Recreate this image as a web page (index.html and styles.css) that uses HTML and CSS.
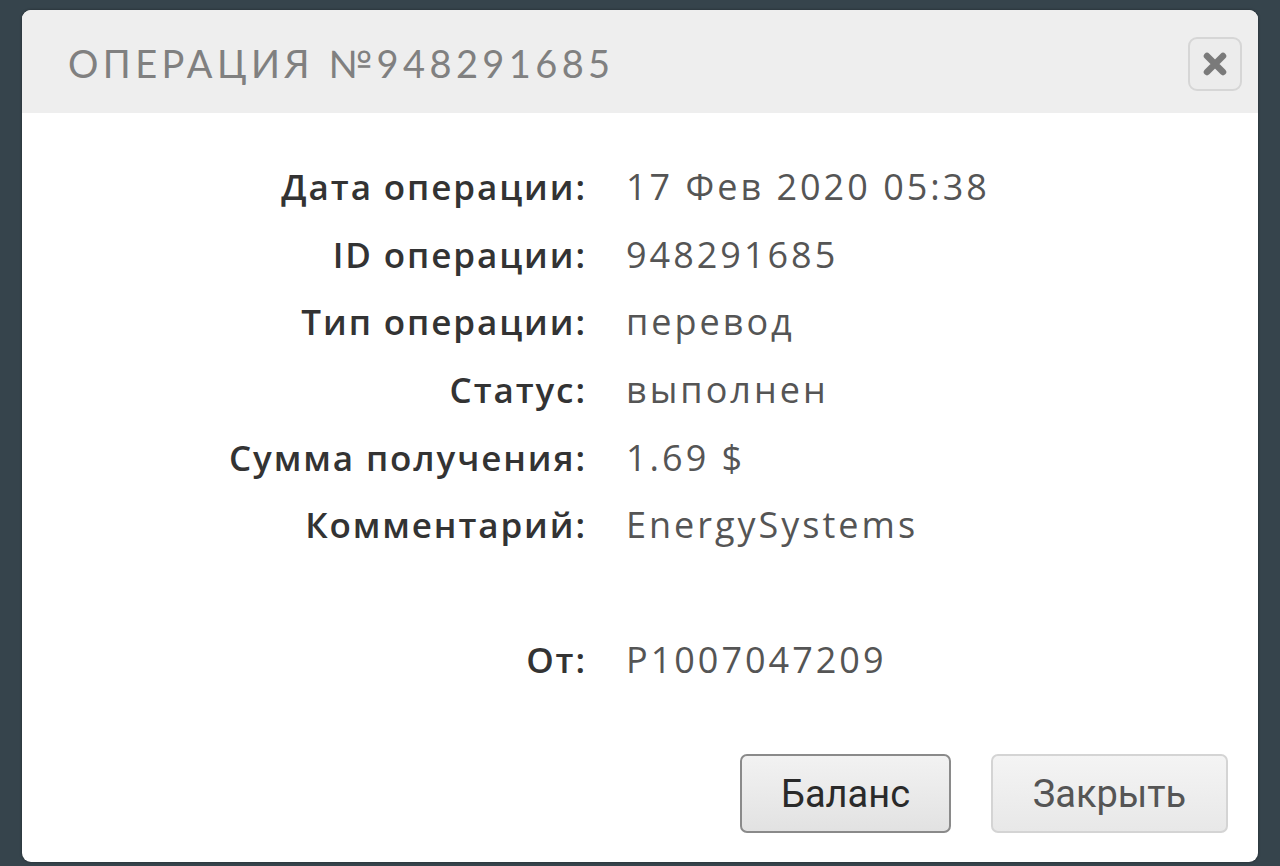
FILE: index.html
```html
<!DOCTYPE html>
<html lang="ru">
<head>
<meta charset="utf-8">
<title>Операция</title>
<link rel="stylesheet" href="styles.css">
</head>
<body>
<div class="screen">
  <div class="dialog">
    <div class="dialog-header">
      <h1 class="dialog-title">ОПЕРАЦИЯ №948291685</h1>
      <button class="close-btn" aria-label="Закрыть">
        <svg width="26" height="26" viewBox="0 0 26 26"><path d="M5 5 L21 21 M21 5 L5 21" stroke="#7a7a7a" stroke-width="6.5" stroke-linecap="round"/></svg>
      </button>
    </div>
    <div class="dialog-body">
      <dl class="details">
        <dt>Дата операции:</dt><dd>17 Фев 2020 05:38</dd>
        <dt>ID операции:</dt><dd>948291685</dd>
        <dt>Тип операции:</dt><dd>перевод</dd>
        <dt>Статус:</dt><dd>выполнен</dd>
        <dt>Сумма получения:</dt><dd>1.69 $</dd>
        <dt>Комментарий:</dt><dd>EnergySystems</dd>
        <dt class="spacer"></dt><dd class="spacer"></dd>
        <dt>От:</dt><dd>P1007047209</dd>
      </dl>
      <div class="actions">
        <button class="btn btn-primary">Баланс</button>
        <button class="btn btn-secondary">Закрыть</button>
      </div>
    </div>
  </div>
</div>
</body>
</html>
```
FILE: styles.css
```css
html, body {
  margin: 0;
  padding: 0;
  height: 100%;
}
body {
  background: #36444c;
  font-family: "Open Sans", "Lato", sans-serif;
}
.screen {
  padding: 10px 22px 0 22px;
  height: 866px;
  box-sizing: border-box;
}
.dialog {
  width: 1236px;
  height: 852px;
  background: #ffffff;
  border-radius: 9px;
  overflow: hidden;
  display: flex;
  flex-direction: column;
  box-shadow: 0 0 3px rgba(0,0,0,0.4);
}
.dialog-header {
  height: 103px;
  background: #eeeeee;
  display: flex;
  align-items: center;
  justify-content: space-between;
  padding: 0 16px 0 46px;
  box-sizing: border-box;
  flex: none;
}
.dialog-title {
  margin: 0;
  font-family: "Lato", sans-serif;
  font-weight: 400;
  font-size: 38px;
  letter-spacing: 4.4px;
  color: #808080;
  padding-top: 2px;
}
.close-btn {
  width: 54px;
  height: 54px;
  border: 2px solid #d6d6d6;
  border-radius: 9px;
  background: #ececec;
  display: flex;
  align-items: center;
  justify-content: center;
  padding: 0;
  margin-top: 5px;
}
.dialog-body {
  flex: 1;
  display: flex;
  flex-direction: column;
  padding: 40px 30px 29px 0;
}
.details {
  margin: 0;
  display: grid;
  grid-template-columns: 563px 1fr;
  column-gap: 41px;
  grid-auto-rows: 67.6px;
  align-items: center;
  font-size: 35px;
}
.details dt {
  text-align: right;
  font-weight: 600;
  color: #333333;
  letter-spacing: 1.9px;
  margin-right: -1.9px;
}
.details dd {
  margin: 0;
  color: #555555;
  font-size: 36px;
  letter-spacing: 3px;
}
.actions {
  margin-top: auto;
  display: flex;
  justify-content: flex-end;
  gap: 40px;
}
.btn {
  height: 79px;
  border-radius: 7px;
  font-family: "Roboto", sans-serif;
  font-size: 38px;
  padding: 0;
  background: linear-gradient(#f2f2f2, #e2e2e2);
}
.btn-primary {
  width: 211px;
  border: 2px solid #8a8a8a;
  color: #2a2a2a;
}
.btn-secondary {
  width: 237px;
  border: 2px solid #d4d4d4;
  color: #555555;
  background: linear-gradient(#f4f4f4, #e8e8e8);
}
```
